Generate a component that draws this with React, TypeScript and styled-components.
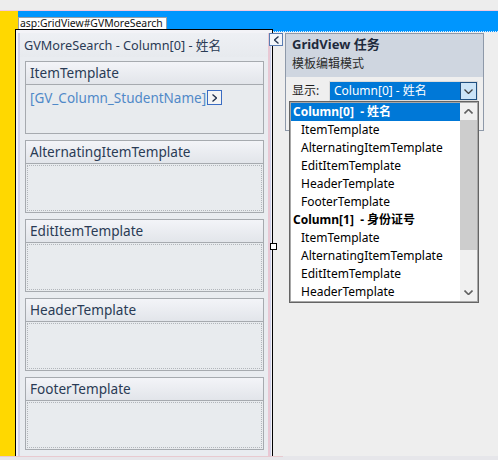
import React from "react";
import styled, { createGlobalStyle } from "styled-components";

const FONT = `"Noto Sans", "Noto Sans CJK SC", sans-serif`;

const GlobalStyle = createGlobalStyle`
  html, body { margin: 0; padding: 0; }
  body { background: #eeeeee; font-family: ${FONT}; }
  * { box-sizing: border-box; }
`;

const Page = styled.div`
  width: 498px;
  height: 460px;
  display: flex;
  flex-direction: column;
  overflow: hidden;
  background: #eeeeee;
  font-family: ${FONT};
`;

const TopStrip = styled.div`
  height: 11px;
  flex: none;
  background: #ededed;
  border-bottom: 1px solid #f3cadf;
`;

const Stage = styled.div`
  height: 445px;
  flex: none;
  display: flex;
`;

const YellowRail = styled.div`
  width: 15px;
  flex: none;
  background: #ffd800;
`;

const Canvas = styled.div`
  flex: 1;
  display: flex;
  flex-direction: column;
  min-width: 0;
`;

const Band = styled.div`
  height: 21px;
  flex: none;
  display: flex;
  align-items: flex-start;
  background: #0096fe;
  border-left: 3px solid #ffd800;
  border-bottom: 1px dotted #dcecff;
  padding-top: 6px;
`;

const Tag = styled.div`
  position: relative;
  z-index: 2;
  height: 12px;
  width: 149px;
  flex: none;
  background: #ffffff;
  border: 1px solid #9aa0a8;
  border-bottom: none;
  font-size: 10.4px;
  line-height: 11px;
  padding-left: 1px;
  color: #111111;
  white-space: nowrap;
`;

const Workspace = styled.div`
  flex: 1;
  display: flex;
  margin-top: -3px;
  min-height: 0;
`;

const Frame = styled.div`
  position: relative;
  width: 258px;
  flex: none;
  display: flex;
  border: 1px solid #000000;
  border-bottom: none;
  padding: 3px 2px 0 2px;
  background: #f3f3f7;
`;

const Handle = styled.div`
  position: absolute;
  right: -5px;
  top: 213px;
  width: 7px;
  height: 7px;
  background: #ffffff;
  border: 1px solid #000000;
`;

const DesignPanel = styled.div`
  flex: 1;
  display: flex;
  flex-direction: column;
  background: #e9ecf0;
  border-left: 2px solid #d0d1ea;
  border-right: 2px solid #e8c8d4;
  box-shadow: 1px 0 0 #cfd0ea;
`;

const PanelTitle = styled.div`
  height: 24px;
  line-height: 24px;
  padding-left: 4px;
  font-size: 12.7px;
  color: #2a3b55;
  background: linear-gradient(#eef0f4, #e7eaee);
  white-space: nowrap;
`;

const TemplateList = styled.div`
  display: flex;
  flex-direction: column;
  gap: 6px;
  padding: 4px 4px 0 5px;
`;

const TemplateBox = styled.div`
  height: 73px;
  display: flex;
  flex-direction: column;
  border: 1px solid #a6aaaf;
  background: #e8ebee;
`;

const TemplateHeader = styled.div`
  height: 23px;
  flex: none;
  padding-left: 4px;
  line-height: 22px;
  font-size: 13.6px;
  color: #2a3b55;
  border-bottom: 1px solid #a6aaaf;
  background: linear-gradient(#f3f4f8, #e2e5ea);
`;

const TemplateBody = styled.div`
  flex: 1;
  display: flex;
  padding: 1px;
`;

const DropZone = styled.div`
  flex: 1;
  border: 1px dotted #b2b6bb;
`;

const BoundField = styled.div`
  flex: 1;
  display: flex;
  align-items: flex-start;
  padding: 4px 0 0 3px;
`;

const FieldText = styled.span`
  font-size: 13.5px;
  line-height: 16px;
  color: #5089c8;
  white-space: nowrap;
`;

const FieldButton = styled.span`
  width: 15px;
  height: 15px;
  margin-left: 1px;
  flex: none;
  display: flex;
  align-items: center;
  justify-content: center;
  border: 1px solid #3a6cc2;
  background: #f4f4f4;
`;

const TaskArea = styled.div`
  position: relative;
  flex: 1;
  padding: 4px 0 0 12px;
`;

const SmartTag = styled.div`
  position: absolute;
  left: -4px;
  top: 4px;
  width: 14px;
  height: 13px;
  display: flex;
  align-items: center;
  justify-content: center;
  border: 1px solid #5a7db2;
  background: #f2f5f9;
`;

const TaskPanel = styled.div`
  width: 199px;
  border: 1px solid #8e99a9;
  background: #efefef;
`;

const TaskHeader = styled.div`
  background: #cfd6e0;
  padding: 0 0 3px 6px;
`;

const TaskTitle = styled.div`
  font-size: 13px;
  font-weight: bold;
  line-height: 20px;
  color: #1e2a3c;
`;

const TaskSub = styled.div`
  font-size: 12px;
  line-height: 20px;
  color: #2b2b2b;
`;

const TaskBody = styled.div`
  height: 53px;
  display: flex;
  align-items: flex-start;
  padding: 4px 4px 0 6px;
`;

const FieldLabel = styled.div`
  width: 37px;
  flex: none;
  font-size: 12px;
  line-height: 20px;
  color: #1e1e1e;
`;

const Select = styled.div`
  width: 149px;
  height: 20px;
  display: flex;
  border: 1px solid #dcdcdc;
  background: #ffffff;
`;

const SelectValue = styled.div`
  flex: 1;
  background: #0078d7;
  color: #ffffff;
  font-size: 12px;
  line-height: 18px;
  padding-left: 4px;
  white-space: nowrap;
`;

const SelectButton = styled.div`
  width: 17px;
  flex: none;
  display: flex;
  align-items: center;
  justify-content: center;
  background: #cce4f7;
  border: 1px solid #1f4f80;
`;

const DropList = styled.div`
  position: absolute;
  left: 16px;
  top: 72px;
  width: 190px;
  height: 202px;
  display: flex;
  background: #ffffff;
  border: 1px solid #646464;
  box-shadow: inset 0 0 0 1px #a8a8a8;
  padding: 1px;
`;

const Items = styled.div`
  flex: 1;
  display: flex;
  flex-direction: column;
  overflow: hidden;
`;

const Item = styled.div<{ $group?: boolean; $selected?: boolean }>`
  height: 18px;
  flex: none;
  line-height: 18px;
  font-size: 12px;
  white-space: pre;
  padding-left: ${(p) => (p.$group ? "2px" : "10px")};
  font-weight: ${(p) => (p.$group ? "bold" : "normal")};
  background: ${(p) => (p.$selected ? "#0078d7" : "transparent")};
  color: ${(p) => (p.$selected ? "#ffffff" : "#000000")};
`;

const Scrollbar = styled.div`
  width: 17px;
  flex: none;
  display: flex;
  flex-direction: column;
  background: #f0f0f0;
`;

const ScrollArrow = styled.div`
  height: 17px;
  flex: none;
  display: flex;
  align-items: center;
  justify-content: center;
`;

const ScrollThumb = styled.div`
  height: 130px;
  flex: none;
  background: #cdcdcd;
`;

const ScrollTrack = styled.div`
  flex: 1;
`;

const BottomStrip = styled.div`
  flex: 1;
  background: linear-gradient(to right, #e8cad0 283px, #e6e6ea 283px) top / 100% 1px no-repeat, #e6e6ea;
`;

type Dir = "up" | "down" | "left" | "right";

const Chevron = ({ dir, w = 8, h = 5, color = "#3f3f3f", sw = 1.3 }: { dir: Dir; w?: number; h?: number; color?: string; sw?: number }) => {
  const vertical = dir === "up" || dir === "down";
  const W = vertical ? w : h;
  const H = vertical ? h : w;
  let pts = "";
  if (dir === "down") pts = `0.5,0.5 ${W / 2},${H - 0.5} ${W - 0.5},0.5`;
  if (dir === "up") pts = `0.5,${H - 0.5} ${W / 2},0.5 ${W - 0.5},${H - 0.5}`;
  if (dir === "left") pts = `${W - 0.5},0.5 0.5,${H / 2} ${W - 0.5},${H - 0.5}`;
  if (dir === "right") pts = `0.5,0.5 ${W - 0.5},${H / 2} 0.5,${H - 0.5}`;
  return (
    <svg width={W} height={H} viewBox={`0 0 ${W} ${H}`}>
      <polyline points={pts} fill="none" stroke={color} strokeWidth={sw} />
    </svg>
  );
};

const templates = ["ItemTemplate", "AlternatingItemTemplate", "EditItemTemplate", "HeaderTemplate", "FooterTemplate"];

const listItems: { text: string; group?: boolean; selected?: boolean }[] = [
  { text: "Column[0]  - 姓名", group: true, selected: true },
  { text: "ItemTemplate" },
  { text: "AlternatingItemTemplate" },
  { text: "EditItemTemplate" },
  { text: "HeaderTemplate" },
  { text: "FooterTemplate" },
  { text: "Column[1]  - 身份证号", group: true },
  { text: "ItemTemplate" },
  { text: "AlternatingItemTemplate" },
  { text: "EditItemTemplate" },
  { text: "HeaderTemplate" },
];

export default function App() {
  return (
    <Page>
      <GlobalStyle />
      <TopStrip />
      <Stage>
        <YellowRail />
        <Canvas>
          <Band>
            <Tag>asp:GridView#GVMoreSearch</Tag>
          </Band>
          <Workspace>
            <Frame>
              <DesignPanel>
                <PanelTitle>GVMoreSearch - Column[0] - 姓名</PanelTitle>
                <TemplateList>
                  {templates.map((t, i) => (
                    <TemplateBox key={t}>
                      <TemplateHeader>{t}</TemplateHeader>
                      <TemplateBody>
                        {i === 0 ? (
                          <BoundField>
                            <FieldText>[GV_Column_StudentName]</FieldText>
                            <FieldButton>
                              <Chevron dir="right" w={8} h={5} color="#1f2f4a" />
                            </FieldButton>
                          </BoundField>
                        ) : (
                          <DropZone />
                        )}
                      </TemplateBody>
                    </TemplateBox>
                  ))}
                </TemplateList>
              </DesignPanel>
              <Handle />
            </Frame>
            <TaskArea>
              <SmartTag>
                <Chevron dir="left" w={8} h={5} color="#24344f" />
              </SmartTag>
              <TaskPanel>
                <TaskHeader>
                  <TaskTitle>GridView 任务</TaskTitle>
                  <TaskSub>模板编辑模式</TaskSub>
                </TaskHeader>
                <TaskBody>
                  <FieldLabel>显示:</FieldLabel>
                  <Select>
                    <SelectValue>Column[0] - 姓名</SelectValue>
                    <SelectButton>
                      <Chevron dir="down" w={9} h={5} color="#404040" />
                    </SelectButton>
                  </Select>
                </TaskBody>
              </TaskPanel>
              <DropList>
                <Items>
                  {listItems.map((it, i) => (
                    <Item key={i} $group={it.group} $selected={it.selected}>
                      {it.text}
                    </Item>
                  ))}
                </Items>
                <Scrollbar>
                  <ScrollArrow>
                    <Chevron dir="up" w={9} h={5} color="#606060" sw={1.6} />
                  </ScrollArrow>
                  <ScrollThumb />
                  <ScrollTrack />
                  <ScrollArrow>
                    <Chevron dir="down" w={9} h={5} color="#606060" sw={1.6} />
                  </ScrollArrow>
                </Scrollbar>
              </DropList>
            </TaskArea>
          </Workspace>
        </Canvas>
      </Stage>
      <BottomStrip />
    </Page>
  );
}
